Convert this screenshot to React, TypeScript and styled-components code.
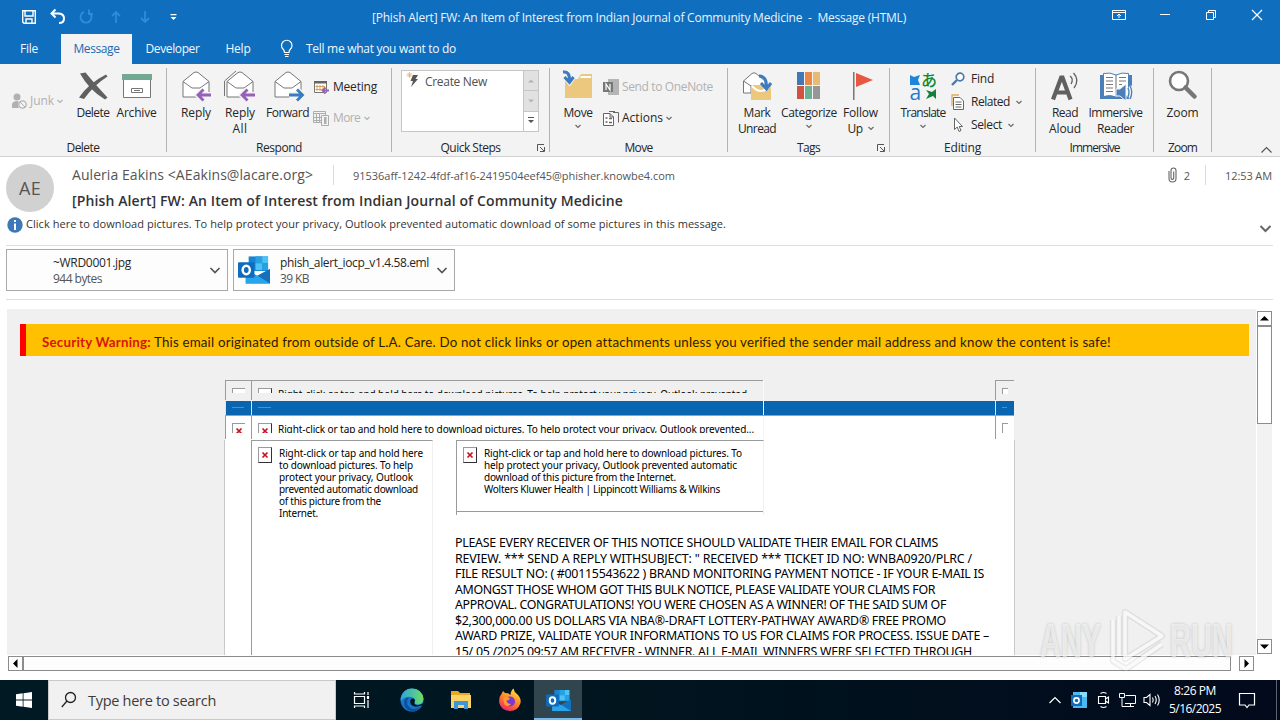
import { useLayoutEffect, useRef } from 'react';
import type { ReactNode } from 'react';
import styled, { createGlobalStyle } from 'styled-components';

const GlobalStyle = createGlobalStyle`
  * {
    box-sizing: border-box;
  }
  body {
    margin: 0;
    width: 1280px;
    height: 720px;
    overflow: hidden;
    background: #ffffff;
    font-family: "Open Sans", "Noto Sans", sans-serif;
    font-size: 12px;
    color: #262626;
  }
  svg {
    display: block;
    flex: none;
    overflow: visible;
  }
`;

const FitSpan = styled.span`
  display: inline-block;
  white-space: pre;
`;

// Spreads a single line of text over an exact width.
function Fit({ w, children }: { w: number; children: string }) {
  const ref = useRef<HTMLSpanElement>(null);
  useLayoutEffect(() => {
    const el = ref.current;
    if (!el) return;
    el.style.letterSpacing = '0px';
    const natural = el.getBoundingClientRect().width;
    el.style.letterSpacing = `${(w - natural) / children.length}px`;
  }, [w, children]);
  return <FitSpan ref={ref}>{children}</FitSpan>;
}

const Window = styled.div`
  position: relative;
  width: 1280px;
  height: 720px;
  display: flex;
  flex-direction: column;
  overflow: hidden;
`;

/* title bar and tabs */

const TitleBar = styled.header`
  display: flex;
  align-items: center;
  height: 34px;
  padding-left: 20px;
  background: #106ebe;
  color: #e8f3fc;
`;

const QuickAccess = styled.div`
  display: flex;
  align-items: center;
  gap: 11px;
  width: 352px;
`;

const WindowTitle = styled.div`
  flex: 1;
`;

const WindowButton = styled.div`
  display: flex;
  align-items: center;
  justify-content: center;
  width: 46px;
  padding-bottom: 4px;
`;

const TabBar = styled.nav`
  display: flex;
  height: 30px;
  background: #106ebe;
  color: #f0f8ff;
`;

const Tab = styled.div<{ $width: number; $active?: boolean }>`
  display: flex;
  align-items: center;
  justify-content: center;
  width: ${(p) => p.$width}px;
  padding-bottom: 1px;
  background: ${(p) => (p.$active ? '#f3f3f3' : 'transparent')};
  color: ${(p) => (p.$active ? '#1c6ab3' : 'inherit')};
`;

const TellMe = styled.div`
  display: flex;
  align-items: center;
  gap: 10px;
  padding: 0 0 1px 15px;
`;

/* ribbon */

const Ribbon = styled.section`
  display: flex;
  height: 93px;
  padding-top: 4px;
  background: #f3f3f3;
  border-bottom: 1px solid #d0d0d0;
`;

const Group = styled.div<{ $width: number }>`
  display: flex;
  flex-direction: column;
  width: ${(p) => p.$width}px;
  height: 84px;
  border-right: 1px solid #b3b3b3;
`;

const GroupBody = styled.div<{ $left: number }>`
  display: flex;
  flex: none;
  height: 71px;
  padding: 2px 0 0 ${(p) => p.$left}px;
`;

const GroupFooter = styled.div`
  display: flex;
  flex: none;
  align-items: center;
  height: 17px;
  line-height: 17px;
`;

const GroupLabel = styled.div`
  flex: 1;
  text-align: center;
`;

const Launcher = styled.div`
  width: 12px;
  margin: 0 1px 0 -13px;
`;

const BigButton = styled.div<{ $width: number }>`
  display: flex;
  flex-direction: column;
  align-items: center;
  width: ${(p) => p.$width}px;
  line-height: 15.5px;
  text-align: center;
  white-space: nowrap;
  svg:first-child {
    margin-bottom: 3px;
  }
`;

const ButtonLine = styled.div`
  display: flex;
  align-items: center;
  justify-content: center;
  gap: 5px;
  height: 15.5px;
`;

const SmallColumn = styled.div<{ $gap: number; $top: number }>`
  display: flex;
  flex-direction: column;
  gap: ${(p) => p.$gap}px;
  padding-top: ${(p) => p.$top}px;
`;

const SmallButton = styled.div<{ $disabled?: boolean; $gap?: number }>`
  display: flex;
  align-items: center;
  gap: ${(p) => p.$gap ?? 3}px;
  height: 16px;
  line-height: 16px;
  color: ${(p) => (p.$disabled ? '#b1b1b1' : 'inherit')};
`;

const Gallery = styled.div`
  display: flex;
  width: 138px;
  height: 62px;
  background: #ffffff;
  border: 1px solid #c6c6c6;
`;

const GalleryItem = styled.div`
  display: flex;
  flex: 1;
  gap: 7px;
  padding: 0 0 0 4px;
  line-height: 22px;
  color: #505050;
`;

const GalleryRail = styled.div`
  display: flex;
  flex-direction: column;
  width: 15px;
  border-left: 1px solid #c6c6c6;
`;

const RailButton = styled.div<{ $disabled?: boolean }>`
  display: flex;
  flex: 1;
  align-items: center;
  justify-content: center;
  background: ${(p) => (p.$disabled ? '#e1e1e1' : '#ffffff')};
  border-bottom: ${(p) => (p.$disabled ? '1px solid #c6c6c6' : 'none')};
`;

const CollapseRibbon = styled.div`
  margin: 78px 8px 0 auto;
`;

/* message header */

const MessageHeader = styled.section`
  display: flex;
  height: 58px;
  padding: 7px 8px 0 6px;
`;

const Avatar = styled.div`
  display: flex;
  align-items: center;
  justify-content: center;
  width: 48px;
  height: 48px;
  border-radius: 50%;
  background: #d1d1d1;
  color: #555555;
  font-size: 18px;
`;

const HeaderLines = styled.div`
  flex: 1;
  padding-left: 18px;
`;

const SenderRow = styled.div`
  display: flex;
  align-items: center;
  height: 22px;
  color: #555555;
  font-size: 11px;
`;

const SenderName = styled.div`
  width: 261px;
  padding-bottom: 2px;
  font-size: 14px;
`;

const HeaderRule = styled.i`
  width: 1px;
  height: 20px;
  background: #dcdcdc;
`;

const Recipient = styled.div`
  flex: 1;
  padding-left: 19px;
`;

const AttachCount = styled.div`
  display: flex;
  align-items: center;
  gap: 7px;
  margin-right: 15px;
`;

const SentTime = styled.div`
  width: 66px;
  text-align: right;
`;

const Subject = styled.div`
  height: 30px;
  line-height: 30px;
  font-size: 14px;
  font-weight: 600;
  color: #333333;
`;

const InfoBar = styled.div`
  display: flex;
  align-items: center;
  gap: 3px;
  height: 30px;
  padding: 0 9px 11px 7px;
  font-size: 11px;
  color: #333333;
`;

const InfoText = styled.div`
  flex: 1;
  padding-bottom: 3px;
`;

const ExpandHeader = styled.div`
  padding-top: 9px;
`;

const Attachments = styled.section`
  display: flex;
  gap: 5px;
  height: 55px;
  margin: 0 7px 0 6px;
  padding-top: 3px;
  border: solid #dddddd;
  border-width: 1px 0;
`;

const Attachment = styled.div`
  display: flex;
  align-items: center;
  width: 222px;
  height: 42px;
  padding: 0 7px 0 4px;
  background: #fdfdfd;
  border: 1px solid #a9a9a9;
`;

const FileIcon = styled.div`
  width: 42px;
`;

const FileInfo = styled.div`
  flex: 1;
  padding-top: 2px;
  line-height: 16px;
  white-space: nowrap;
`;

const FileSize = styled.div`
  color: #555555;
`;

/* message body */

const Reader = styled.section`
  display: flex;
  height: 346px;
  margin-top: 9px;
  padding-left: 7px;
`;

const Canvas = styled.div`
  flex: none;
  width: 1249px;
  height: 346px;
  padding: 15px 7px 0 13px;
  overflow: hidden;
  background: #f0f0f0;
`;

const Warning = styled.div`
  display: flex;
  align-items: center;
  height: 32px;
  padding: 3px 0 0 16px;
  background: #ffc000;
  border-left: 6px solid #ff0000;
  color: #2b1a00;
  font-family: Lato, "Open Sans", sans-serif;
  font-size: 13.3px;
`;

const WarningTitle = styled.b`
  width: 112px;
  color: #d8140a;
`;

const Mail = styled.div`
  width: 791px;
  margin: 24px 0 0 204px;
  color: #000000;
  font-family: "Noto Sans", "Open Sans", sans-serif;
  font-size: 10px;
  line-height: 12px;
`;

type StripKind = 'grey' | 'blue' | 'white';

const Strip = styled.div<{ $kind: StripKind }>`
  display: grid;
  grid-template-columns: 26px 512px 232px 19px;
  width: 789px;
  height: ${(p) => ({ grey: 21, blue: 15, white: 24 })[p.$kind]}px;
  margin-left: 1px;
  background: ${(p) => ({ grey: 'transparent', blue: '#0a65b0', white: '#ffffff' })[p.$kind]};
  border-bottom: 1px solid ${(p) => (p.$kind === 'blue' ? '#7fa9cc' : 'transparent')};
`;

const StripCell = styled.div<{ $kind: StripKind }>`
  display: flex;
  align-items: flex-start;
  padding: ${(p) => ({ grey: 7, blue: 6, white: 7 })[p.$kind]}px 6px 0;
  border-style: solid;
  border-color: ${(p) => (p.$kind === 'blue' ? '#d6e4f0' : '#9b9b9b')};
  border-width: ${(p) => (p.$kind === 'grey' ? '1px 0 0 1px' : '0 0 0 1px')};
  white-space: nowrap;
  overflow: hidden;
`;

const StripGap = styled.div<{ $kind: StripKind }>`
  border-left: 1px solid ${(p) => ({ grey: '#fafafa', blue: '#ffffff', white: '#f4f4f4' })[p.$kind]};
`;

const Cut = styled.div<{ $height: number }>`
  display: flex;
  gap: 6px;
  height: ${(p) => p.$height}px;
  overflow: hidden;
`;

const Dash = styled.i<{ $width: number }>`
  width: ${(p) => p.$width}px;
  height: 1px;
  background: #4f90c4;
`;

const BrokenBox = styled.span`
  display: flex;
  flex: none;
  align-items: center;
  justify-content: center;
  width: 14px;
  height: 16px;
  background: #ffffff;
  border: 1px solid #9a9a9a;
  border-right-color: #333333;
  border-bottom-color: #333333;
`;

const Sheet = styled.div`
  display: flex;
  height: 300px;
  background: #ffffff;
  border: solid #c9c9c9;
  border-width: 0 1px;
`;

const Sidebar = styled.div`
  display: flex;
  gap: 7px;
  width: 182px;
  margin-left: 26px;
  padding: 6px 0 0 6px;
  border: solid #9b9b9b;
  border-width: 1px 0 0 1px;
  border-right: 1px solid #f0f0f0;
`;

const Article = styled.div`
  margin-left: 23px;
`;

const PictureFrame = styled.div`
  display: flex;
  gap: 7px;
  width: 308px;
  height: 75px;
  padding: 6px 0 0 6px;
  background: linear-gradient(#9b9b9b, #9b9b9b) 0 70px / 308px 1px no-repeat;
  border: solid #9b9b9b;
  border-width: 1px 0 0 1px;
  border-right: 1px solid #f0f0f0;
`;

const TextLine = styled.div`
  white-space: nowrap;
`;

const Notice = styled.div`
  margin: 20px 0 0 -1px;
  font-size: 12.4px;
  line-height: 15.5px;
`;

const VerticalScroll = styled.div`
  display: flex;
  flex-direction: column;
  width: 15px;
  height: 343px;
  margin: 2px 0 0 1px;
  background: #f2f2f2;
`;

const ScrollButton = styled.div`
  display: flex;
  flex: none;
  align-items: center;
  justify-content: center;
  width: 15px;
  height: 15px;
  background: #ffffff;
  border: 1px solid #8c8c8c;
`;

const VerticalThumb = styled.div`
  height: 98px;
  margin-bottom: auto;
  background: #ffffff;
  border: 1px solid #8c8c8c;
`;

const HorizontalScroll = styled.div`
  display: flex;
  height: 15px;
  margin-top: 1px;
  padding-left: 8px;
`;

const HorizontalThumb = styled.div`
  width: 1208px;
  margin-right: 8px;
  background: #fdfdfd;
  border: 1px solid #8c8c8c;
`;

const Watermark = styled.div`
  position: absolute;
  left: 1040px;
  top: 606px;
  display: flex;
  align-items: center;
  height: 68px;
  color: rgba(255, 255, 255, 0.62);
  font-family: "Liberation Sans", sans-serif;
  font-size: 49px;
  font-weight: bold;
  text-shadow: 0 0 4px rgba(0, 0, 0, 0.2);
`;

const WatermarkWord = styled.span`
  display: block;
  width: 68px;
  transform: scaleX(0.59);
  transform-origin: left center;
`;

/* taskbar */

const Taskbar = styled.footer`
  display: flex;
  flex: none;
  height: 40px;
  margin-top: 9px;
  background: linear-gradient(90deg, #001a24 0%, #00151f 45%, #020a1c 100%);
  color: #ffffff;
`;

const StartButton = styled.div`
  display: flex;
  align-items: center;
  justify-content: center;
  width: 48px;
`;

const SearchBox = styled.div`
  display: flex;
  align-items: center;
  gap: 11px;
  width: 288px;
  margin-right: 2px;
  padding-left: 12px;
  background: #f1f1f1;
  border: 1px solid #c9c9c9;
  color: #3c3c3c;
  font-size: 14.5px;
`;

const TaskButton = styled.div<{ $active?: boolean }>`
  display: flex;
  align-items: center;
  justify-content: center;
  width: ${(p) => (p.$active ? 48 : 49)}px;
  padding-top: ${(p) => (p.$active ? 2 : 0)}px;
  background: ${(p) => (p.$active ? '#31454e' : 'transparent')};
  border-bottom: ${(p) => (p.$active ? '2px solid #76b9ed' : 'none')};
`;

const Tray = styled.div`
  display: flex;
  align-items: center;
  gap: 7px;
  margin-left: auto;
`;

const TrayToggle = styled.div`
  margin-right: 2px;
`;

const Clock = styled.div`
  width: 56px;
  margin: 0 -2px 0 -1px;
  line-height: 18px;
  text-align: center;
  white-space: nowrap;
`;

const ShowDesktop = styled.div`
  width: 4px;
  height: 40px;
  margin-left: 3px;
  border-left: 1px solid #5a6470;
`;

/* icons */

function Chevron({ size = 6, color = '#6a6a6a', width = 1.2, up = false }: { size?: number; color?: string; width?: number; up?: boolean }) {
  return (
    <svg width={size} height={size / 2 + 2} viewBox={`0 0 ${size} ${size / 2 + 2}`} fill="none" stroke={color} strokeWidth={width}>
      <path d={up ? `M.5 ${size / 2 + 1} L${size / 2} 1.5 L${size - 0.5} ${size / 2 + 1}` : `M.5 1 L${size / 2} ${size / 2 + 0.5} L${size - 0.5} 1`} />
    </svg>
  );
}

function Envelope({ kind }: { kind: 'reply' | 'replyAll' | 'forward' }) {
  const arrow = kind === 'forward' ? 'M18 25H31M26 19.500 31.500 25 26 30.500' : 'M32 25H19M24.500 19.500 19 25 24.500 30.500';
  return (
    <svg width="34" height="32" viewBox="0 0 34 32" fill="none">
      {kind === 'replyAll' && <path d="M1.500 26V11L13 1" stroke="#777" />}
      <path d="M4 11.500 15 2.500Q17 1.500 19 2.500L30 11.500V27H4Z" fill="#fff" stroke="#777" />
      <path d="M4 11.500 13 18H21L30 11.500" stroke="#777" />
      <path d={arrow} stroke="#f3f3f3" strokeWidth="6" />
      <path d={arrow} stroke={kind === 'forward' ? '#3b7bbf' : '#9560b8'} strokeWidth="2.800" />
    </svg>
  );
}

function OutlookIcon({ width, height }: { width: number; height: number }) {
  return (
    <svg width={width} height={height} viewBox="0 0 33 28">
      <path d="M11 0H31V15H11Z" fill="#1684d0" />
      <path d="M18 0H25V7H18Z" fill="#28a0e4" />
      <path d="M25 0H31V7H25ZM18 7H25V14H18Z" fill="#4cc3f5" />
      <path d="M25 7H31V14H25Z" fill="#28a0e4" />
      <path d="M8 14 20 20 33 13V28H8Z" fill="#1a8fdc" />
      <path d="M33 13V28L20 20Z" fill="#1470bd" />
      <path d="M8 22 20 20 33 28H8Z" fill="#27a4ea" />
      <rect x="0" y="6" width="17" height="16" rx="1" fill="#0f6cbd" />
      <ellipse cx="8.500" cy="14" rx="3.700" ry="4.300" fill="none" stroke="#fff" strokeWidth="2.500" />
    </svg>
  );
}

const RedCross = () => (
  <svg width="8" height="8" viewBox="0 0 8 8" stroke="#cc1020" strokeWidth="1.700">
    <path d="M1.500 1.500 6.500 6.500M6.500 1.500 1.500 6.500" />
  </svg>
);

const Broken = () => (
  <BrokenBox>
    <RedCross />
  </BrokenBox>
);

const LauncherIcon = () => (
  <svg width="10" height="10" viewBox="0 0 10 10" fill="none" stroke="#555">
    <path d="M1.500 8V1.500H8M4 4 8 8M8.500 4V8.500H4" />
  </svg>
);

const Arrow = ({ d }: { d: string }) => (
  <svg width="9" height="9" viewBox="0 0 9 9">
    <path d={d} fill="#000" />
  </svg>
);

const noticeLines: [number, string][] = [
  [483, 'PLEASE EVERY RECEIVER OF THIS NOTICE SHOULD VALIDATE THEIR EMAIL FOR CLAIMS'],
  [517, 'REVIEW. *** SEND A REPLY WITHSUBJECT: " RECEIVED *** TICKET ID NO: WNBA0920/PLRC /'],
  [529, 'FILE RESULT NO: ( #00115543622 ) BRAND MONITORING PAYMENT NOTICE - IF YOUR E-MAIL IS'],
  [480, 'AMONGST THOSE WHOM GOT THIS BULK NOTICE, PLEASE VALIDATE YOUR CLAIMS FOR'],
  [491, 'APPROVAL. CONGRATULATIONS! YOU WERE CHOSEN AS A WINNER! OF THE SAID SUM OF'],
  [491, '$2,300,000.00 US DOLLARS VIA NBA®-DRAFT LOTTERY-PATHWAY AWARD® FREE PROMO'],
  [534, 'AWARD PRIZE, VALIDATE YOUR INFORMATIONS TO US FOR CLAIMS FOR PROCESS. ISSUE DATE –'],
  [517, '15/ 05 /2025 09:57 AM RECEIVER - WINNER. ALL E-MAIL WINNERS WERE SELECTED THROUGH'],
];

const sidebarLines: [number, string][] = [
  [144, 'Right-click or tap and hold here'],
  [134, 'to download pictures. To help'],
  [134, 'protect your privacy, Outlook'],
  [139, 'prevented automatic download'],
  [102, 'of this picture from the'],
  [39, 'Internet.'],
];

const pictureLines: [number, string][] = [
  [258, 'Right-click or tap and hold here to download pictures. To'],
  [253, 'help protect your privacy, Outlook prevented automatic'],
  [192, 'download of this picture from the Internet.'],
  [236, 'Wolters Kluwer Health | Lippincott Williams & Wilkins'],
];

function RibbonGroup({ width, left, label, labelWidth, launcher, children }: { width: number; left: number; label: string; labelWidth: number; launcher?: boolean; children: ReactNode }) {
  return (
    <Group $width={width}>
      <GroupBody $left={left}>{children}</GroupBody>
      <GroupFooter>
        <GroupLabel>
          <Fit w={labelWidth}>{label}</Fit>
        </GroupLabel>
        {launcher && (
          <Launcher>
            <LauncherIcon />
          </Launcher>
        )}
      </GroupFooter>
    </Group>
  );
}

export default function App() {
  return (
    <>
      <GlobalStyle />
      <Window>
        <TitleBar>
          <QuickAccess>
            <svg width="18" height="18" viewBox="0 0 18 18" fill="none" stroke="#fff" strokeWidth="1.400">
              <path d="M2.700 2.700H15.300V15.300H4L2.700 14Z M5 3V8H13V3M6 15V11H12V15" />
            </svg>
            <svg width="18" height="18" viewBox="0 0 18 18" fill="none" stroke="#fff" strokeWidth="2">
              <path d="M6.500 1.500 2.500 5.500 6.500 9.500M3 5.500H10Q15 6 15 10.500Q15 15 10 15" />
            </svg>
            <svg width="18" height="18" viewBox="0 0 18 18" fill="none" stroke="#2d8dd8" strokeWidth="1.900">
              <path d="M11 4.500A5.500 5.500 0 1 1 6 4M11 1.500V6H15" />
            </svg>
            <svg width="18" height="18" viewBox="0 0 18 18" fill="none" stroke="#2d8dd8" strokeWidth="1.800">
              <path d="M9 15V4M5 8 9 4 13 8" />
            </svg>
            <svg width="18" height="18" viewBox="0 0 18 18" fill="none" stroke="#2d8dd8" strokeWidth="1.800">
              <path d="M9 3V14M5 10 9 14 13 10" />
            </svg>
            <svg width="18" height="18" viewBox="0 0 18 18">
              <path d="M5.500 6H11.500V7.200H5.500ZM5.500 9H11.500L8.500 12Z" fill="#fff" />
            </svg>
          </QuickAccess>
          <WindowTitle>
            <Fit w={534}>[Phish Alert] FW: An Item of Interest from Indian Journal of Community Medicine  -  Message (HTML)</Fit>
          </WindowTitle>
          <WindowButton>
            <svg width="14" height="12" viewBox="0 0 14 12" fill="none" stroke="#fff">
              <path d="M.5 1.500H13.500V10.500H.5ZM.5 3.500H13.500M7 9V5M5 7 7 5 9 7" />
            </svg>
          </WindowButton>
          <WindowButton>
            <svg width="10" height="12" viewBox="0 0 10 12" stroke="#fff">
              <path d="M0 5.500H10" />
            </svg>
          </WindowButton>
          <WindowButton>
            <svg width="10" height="12" viewBox="0 0 10 12" fill="none" stroke="#fff">
              <path d="M.5 3.500H7.500V10.500H.5ZM2.500 3V1.500H9.500V8.500H8" />
            </svg>
          </WindowButton>
          <WindowButton>
            <svg width="12" height="12" viewBox="0 0 12 12" stroke="#fff" strokeWidth="1.200">
              <path d="M1 1 11 11M11 1 1 11" />
            </svg>
          </WindowButton>
        </TitleBar>

        <TabBar>
          <Tab $width={58}><Fit w={18}>File</Fit></Tab>
          <Tab $width={3} />
          <Tab $width={71} $active><Fit w={46}>Message</Fit></Tab>
          <Tab $width={81}><Fit w={54}>Developer</Fit></Tab>
          <Tab $width={50}><Fit w={25}>Help</Fit></Tab>
          <TellMe>
            <svg width="18" height="20" viewBox="0 0 18 20" fill="none" stroke="#fff" strokeWidth="1.200">
              <path d="M6.500 13.500Q6.500 11.500 5 10Q3.500 8.500 3.500 6.500A5 5 0 0 1 14 6.500Q14 8.500 12.500 10Q11 11.500 11 13.500ZM6.500 15.500H11M7 17.500H10.500" />
            </svg>
            <Fit w={150}>Tell me what you want to do</Fit>
          </TellMe>
        </TabBar>

        <Ribbon>
          <RibbonGroup width={167} left={11} label="Delete" labelWidth={33}>
            <SmallColumn $gap={0} $top={23}>
              <SmallButton $disabled>
                <svg width="16" height="16" viewBox="0 0 16 16" fill="none" stroke="#b1b1b1">
                  <circle cx="6" cy="4" r="3.500" fill="#b1b1b1" stroke="none" />
                  <path d="M1 14V11Q2 8 6 8L8 9Q6 12 8 15H1Z" fill="#b1b1b1" stroke="none" />
                  <circle cx="11.500" cy="11.500" r="3.700" fill="#f3f3f3" strokeWidth="1.300" />
                  <path d="M9 9 14 14" />
                </svg>
                <Fit w={24}>Junk</Fit>
                <Chevron color="#b1b1b1" />
              </SmallButton>
            </SmallColumn>
            <BigButton $width={60}>
              <svg width="32" height="32" viewBox="0 0 32 32" fill="#606060">
                <path d="M3 3.500 8.500 2.500Q17 13 30.500 27.500L28 29.500Q12 20 3 3.500ZM29 4.500 30.500 6.500Q17 15 7 29L2 27.500Q12 13 29 4.500Z" />
              </svg>
              <ButtonLine><Fit w={33}>Delete</Fit></ButtonLine>
            </BigButton>
            <BigButton $width={27}>
              <svg width="32" height="32" viewBox="0 0 32 32" fill="none" stroke="#777">
                <path d="M2.500 9V27.500H29.500V9" fill="#fff" />
                <path d="M1 4H31V10H1Z" fill="#73a892" stroke="none" />
                <path d="M10.500 18.500H21.500V22.500H10.500ZM13 20.500H19" />
              </svg>
              <ButtonLine><Fit w={40}>Archive</Fit></ButtonLine>
            </BigButton>
          </RibbonGroup>

          <RibbonGroup width={225} left={7} label="Respond" labelWidth={46}>
            <BigButton $width={44}>
              <Envelope kind="reply" />
              <ButtonLine><Fit w={30}>Reply</Fit></ButtonLine>
            </BigButton>
            <BigButton $width={44}>
              <Envelope kind="replyAll" />
              <ButtonLine><Fit w={30}>Reply</Fit></ButtonLine>
              <ButtonLine><Fit w={15}>All</Fit></ButtonLine>
            </BigButton>
            <BigButton $width={51}>
              <Envelope kind="forward" />
              <ButtonLine><Fit w={43}>Forward</Fit></ButtonLine>
            </BigButton>
            <SmallColumn $gap={15} $top={9}>
              <SmallButton $gap={4}>
                <svg width="16" height="16" viewBox="0 0 16 16" fill="none">
                  <path d="M1.500 3H13.500V13.500H1.500Z" fill="#fff" stroke="#777" />
                  <path d="M1 2H14V4.500H1Z" fill="#666" />
                  <path d="M4 6V12M7 6V12M10 6V12M2.500 7.500H12M2.500 10.500H9" stroke="#d9a05b" />
                  <path d="M16 11.500H10M12.500 8.500 9.500 11.500 12.500 14.500" stroke="#9560b8" strokeWidth="1.800" />
                </svg>
                <Fit w={44}>Meeting</Fit>
              </SmallButton>
              <SmallButton $disabled $gap={4}>
                <svg width="16" height="16" viewBox="0 0 16 16" fill="none" stroke="#adadad">
                  <path d="M.5 1.500H12.500V12.500H.5ZM.5 3.500H12.500M3.500 4V12M6.500 4V12M1 7.500H8M1 10.500H8" />
                  <path d="M8.500 5.500H15.500V15.500H8.500Z" fill="#f3f3f3" />
                  <path d="M11 7H13.500V14H11Z" fill="#adadad" stroke="none" />
                </svg>
                <Fit w={27}>More</Fit>
                <Chevron color="#b1b1b1" />
              </SmallButton>
            </SmallColumn>
          </RibbonGroup>

          <RibbonGroup width={158} left={9} label="Quick Steps" labelWidth={60} launcher>
            <Gallery>
              <GalleryItem>
                <svg width="12" height="18" viewBox="0 0 12 18">
                  <path d="M7 4H12L9.500 8H12L5 16 7 10H4.500Z" fill="#555" />
                  <path d="M3.500 1V7M.5 4H6.500M1.500 2 5.500 6M5.500 2 1.500 6" stroke="#e5b265" strokeWidth=".8" />
                </svg>
                <Fit w={62}>Create New</Fit>
              </GalleryItem>
              <GalleryRail>
                <RailButton $disabled>
                  <svg width="6" height="4" viewBox="0 0 6 4"><path d="M0 3.500H6L3 .5Z" fill="#b3b3b3" /></svg>
                </RailButton>
                <RailButton $disabled>
                  <svg width="6" height="4" viewBox="0 0 6 4"><path d="M0 .5H6L3 3.500Z" fill="#b3b3b3" /></svg>
                </RailButton>
                <RailButton>
                  <svg width="8" height="8" viewBox="0 0 8 8"><path d="M1 0H7V1H1ZM1 3H7L4 6Z" fill="#555" /></svg>
                </RailButton>
              </GalleryRail>
            </Gallery>
          </RibbonGroup>

          <RibbonGroup width={178} left={3} label="Move" labelWidth={28}>
            <BigButton $width={50}>
              <svg width="32" height="32" viewBox="0 0 32 32">
                <path d="M3 9H16L19 4H30V28H3Z" fill="#ecc77e" />
                <path d="M19 6H29V8H18Z" fill="#fff" />
                <path d="M1 2Q8 1 7.500 10M3 7 7.500 12.500 11.500 7" fill="none" stroke="#f3f3f3" strokeWidth="5" />
                <path d="M1 2Q8 1 7.500 11M2.500 7 7.500 12.500 11.500 7" fill="none" stroke="#3b7bbf" strokeWidth="3" />
              </svg>
              <ButtonLine><Fit w={29}>Move</Fit></ButtonLine>
              <ButtonLine><Chevron /></ButtonLine>
            </BigButton>
            <SmallColumn $gap={15} $top={9}>
              <SmallButton $disabled>
                <svg width="16" height="16" viewBox="0 0 16 16">
                  <path d="M5 0H16V16H5Z" fill="#b5b5b5" />
                  <path d="M0 3H10V13H0Z" fill="#777" />
                  <path d="M3 11V5L7 11V5" fill="none" stroke="#fff" strokeWidth="1.200" />
                </svg>
                <Fit w={91}>Send to OneNote</Fit>
              </SmallButton>
              <SmallButton>
                <svg width="16" height="16" viewBox="0 0 16 16" fill="none" stroke="#666">
                  <path d="M10 2.500H15.500V12.500M6 1.500H12" />
                  <path d="M.5 3.500H7L10.500 7V15.500H.5ZM7 3.500V7H10.500" fill="#fff" />
                  <path d="M2.500 8H4.500M2.500 12H4.500M6 8.500H9M6 12.500H9" strokeWidth="1.300" />
                </svg>
                <Fit w={41}>Actions</Fit>
                <Chevron />
              </SmallButton>
            </SmallColumn>
          </RibbonGroup>

          <RibbonGroup width={162} left={5} label="Tags" labelWidth={23} launcher>
            <BigButton $width={48}>
              <svg width="32" height="32" viewBox="0 0 32 32" fill="none">
                <path d="M2.500 11 11 3.500Q13 2 15 3.500L24 11V23H2.500Z" fill="#fff" stroke="#777" />
                <path d="M2.500 11 10 16V23" stroke="#777" />
                <path d="M10 15H30V30H10Z" fill="#ecc77e" />
                <path d="M11 16Q20 26 29 16" stroke="#fff" strokeWidth="2" />
                <path d="M18 6Q26 6 25.500 17M20 13 25.500 19 30 13" stroke="#3b7bbf" strokeWidth="3" />
              </svg>
              <ButtonLine><Fit w={27}>Mark</Fit></ButtonLine>
              <ButtonLine><Fit w={38}>Unread</Fit></ButtonLine>
            </BigButton>
            <BigButton $width={56}>
              <svg width="32" height="32" viewBox="0 0 32 32">
                <path d="M4 2H11V15H4Z" fill="#4277b5" />
                <path d="M12 2H19V15H12Z" fill="#ec8745" />
                <path d="M20 2H27V15H20Z" fill="#e7bb73" />
                <path d="M4 16H11V29H4Z" fill="#cf5340" />
                <path d="M12 16H19V29H12Z" fill="#6daf94" />
                <path d="M20 16H27V29H20Z" fill="#969696" />
              </svg>
              <ButtonLine><Fit w={56}>Categorize</Fit></ButtonLine>
              <ButtonLine><Chevron /></ButtonLine>
            </BigButton>
            <BigButton $width={47}>
              <svg width="32" height="32" viewBox="0 0 32 32">
                <path d="M8 2H9.500V30H8Z" fill="#777" />
                <path d="M11 3 28 10 11 17Z" fill="#e8573f" />
              </svg>
              <ButtonLine><Fit w={35}>Follow</Fit></ButtonLine>
              <ButtonLine><Fit w={15}>Up</Fit><Chevron /></ButtonLine>
            </BigButton>
          </RibbonGroup>

          <RibbonGroup width={146} left={6} label="Editing" labelWidth={37}>
            <BigButton $width={54}>
              <svg width="32" height="32" viewBox="0 0 32 32">
                <path d="M3 5 7 7 13 5 11 10 13 15H3Z" fill="#1c86dc" />
                <path d="M29 19V29L26 26 19 29 22 24 19 20 25 22Z" fill="#15803c" />
                <text x="2.500" y="29.500" fontSize="21" fontFamily="Open Sans" fill="#1c7cd2">a</text>
                <text x="14" y="15.500" fontSize="16" fontWeight="500" fontFamily="Noto Sans CJK JP" fill="#118a2e">あ</text>
              </svg>
              <ButtonLine><Fit w={45}>Translate</Fit></ButtonLine>
              <ButtonLine><Chevron /></ButtonLine>
            </BigButton>
            <SmallColumn $gap={7} $top={1}>
              <SmallButton $gap={6}>
                <svg width="15" height="14" viewBox="-1 0 15 14" fill="none" stroke="#4a79ae" strokeWidth="1.700">
                  <circle cx="9" cy="5" r="3.800" fill="#fff" />
                  <path d="M6 8 1 13" strokeWidth="2.400" />
                </svg>
                <Fit w={23}>Find</Fit>
              </SmallButton>
              <SmallButton $gap={6}>
                <svg width="15" height="16" viewBox="-1 0 15 16" fill="none" stroke="#666">
                  <path d="M1 12V1H8" stroke="#e0ab63" strokeWidth="1.300" />
                  <path d="M2.500 3.500H9L12.500 7V15.500H2.500ZM4.500 8H10.500M4.500 10.500H10.500M4.500 13H10.500" fill="#fff" />
                </svg>
                <Fit w={39}>Related</Fit>
                <Chevron />
              </SmallButton>
              <SmallButton $gap={6}>
                <svg width="15" height="16" viewBox="-1 0 15 16" fill="#fff" stroke="#666">
                  <path d="M3.500 1V12.500L6.200 10 8 14.500 10 13.500 8.200 9.500H11.500Z" />
                </svg>
                <Fit w={31}>Select</Fit>
                <Chevron />
              </SmallButton>
            </SmallColumn>
          </RibbonGroup>

          <RibbonGroup width={118} left={6} label="Immersive" labelWidth={50}>
            <BigButton $width={46}>
              <svg width="32" height="32" viewBox="0 0 32 32" fill="none" stroke="#606060">
                <path d="M4 29.500 12.200 7.500H13.500L21.500 29.500M7.500 22.500H18" strokeWidth="4.200" />
                <path d="M21 6Q25 9 22 14M24.500 3Q31 10 25 18" strokeWidth="1.300" />
              </svg>
              <ButtonLine><Fit w={26}>Read</Fit></ButtonLine>
              <ButtonLine><Fit w={32}>Aloud</Fit></ButtonLine>
            </BigButton>
            <BigButton $width={55}>
              <svg width="34" height="32" viewBox="0 0 34 32" fill="none">
                <path d="M1 5H33V29H1Z" fill="#4a7fb8" />
                <path d="M4.500 3.500Q11 2 17 5Q23 2 29.500 3.500V26.500Q23 24.500 17 27Q11 24.500 4.500 26.500Z" fill="#fff" stroke="#4a7fb8" />
                <path d="M17 5V26M7 7.500H14M7 11H14M7 14.500H14M7 18H14M7 21.500H14M20 7.500H27M20 11H27M20 14.500H23" stroke="#777" strokeWidth="1.100" />
                <path d="M17 19H21L27 14V31L21 26H17Z" fill="#4a7fb8" stroke="#f3f3f3" />
                <path d="M29 18Q31 22 29 27M31 16Q34.500 22 31 29" stroke="#f3f3f3" strokeWidth="3" />
                <path d="M29 18Q31 22 29 27M31 16Q34.500 22 31 29" stroke="#4a7fb8" strokeWidth="1.300" />
              </svg>
              <ButtonLine><Fit w={54}>Immersive</Fit></ButtonLine>
              <ButtonLine><Fit w={37}>Reader</Fit></ButtonLine>
            </BigButton>
          </RibbonGroup>

          <RibbonGroup width={58} left={6} label="Zoom" labelWidth={29}>
            <BigButton $width={45}>
              <svg width="32" height="32" viewBox="0 0 32 32" fill="none" stroke="#777">
                <circle cx="12" cy="11" r="9" fill="#fff" strokeWidth="2.600" />
                <path d="M18.500 17.500 27.500 26.500" strokeWidth="4.500" strokeLinecap="round" />
              </svg>
              <ButtonLine><Fit w={32}>Zoom</Fit></ButtonLine>
            </BigButton>
          </RibbonGroup>
          <CollapseRibbon>
            <Chevron size={11} up color="#555" />
          </CollapseRibbon>
        </Ribbon>

        <MessageHeader>
          <Avatar><Fit w={22}>AE</Fit></Avatar>
          <HeaderLines>
            <SenderRow>
              <SenderName><Fit w={241}>{'Auleria Eakins <AEakins@lacare.org>'}</Fit></SenderName>
              <HeaderRule />
              <Recipient><Fit w={322}>91536aff-1242-4fdf-af16-2419504eef45@phisher.knowbe4.com</Fit></Recipient>
              <AttachCount>
                <svg width="9" height="16" viewBox="0 0 9 16" fill="none" stroke="#666" strokeWidth="1.100">
                  <path d="M1 4V11.500A3.300 3.300 0 0 0 8 11.500V3.500A2.300 2.300 0 0 0 3 3.500V11A1.200 1.200 0 0 0 5.700 11V4.500" />
                </svg>
                2
              </AttachCount>
              <HeaderRule />
              <SentTime><Fit w={47}>12:53 AM</Fit></SentTime>
            </SenderRow>
            <Subject><Fit w={551}>[Phish Alert] FW: An Item of Interest from Indian Journal of Community Medicine</Fit></Subject>
          </HeaderLines>
        </MessageHeader>
        <InfoBar>
          <svg width="16" height="16" viewBox="0 0 16 16">
            <circle cx="8" cy="8" r="7.700" fill="#3d78b8" />
            <path d="M7 3H9V5H7ZM7 6.500H9V13H7Z" fill="#fff" />
          </svg>
          <InfoText>
            <Fit w={700}>Click here to download pictures. To help protect your privacy, Outlook prevented automatic download of some pictures in this message.</Fit>
          </InfoText>
          <ExpandHeader><Chevron size={11} width={2} color="#666" /></ExpandHeader>
        </InfoBar>

        <Attachments>
          <Attachment>
            <FileIcon />
            <FileInfo>
              <div><Fit w={78}>~WRD0001.jpg</Fit></div>
              <FileSize><Fit w={49}>944 bytes</Fit></FileSize>
            </FileInfo>
            <Chevron size={10} width={1.700} color="#555" />
          </Attachment>
          <Attachment>
            <FileIcon><OutlookIcon width={32} height={28} /></FileIcon>
            <FileInfo>
              <div><Fit w={149}>phish_alert_iocp_v1.4.58.eml</Fit></div>
              <FileSize><Fit w={29}>39 KB</Fit></FileSize>
            </FileInfo>
            <Chevron size={10} width={1.700} color="#555" />
          </Attachment>
        </Attachments>

        <Reader>
          <Canvas>
            <Warning>
              <WarningTitle><Fit w={109}>Security Warning:</Fit></WarningTitle>
              <Fit w={956}>This email originated from outside of L.A. Care. Do not click links or open attachments unless you verified the sender mail address and know the content is safe!</Fit>
            </Warning>
            <Mail>
              <Strip $kind="grey">
                <StripCell $kind="grey"><Cut $height={5}><Broken /></Cut></StripCell>
                <StripCell $kind="grey">
                  <Cut $height={5}>
                    <Broken />
                    <Fit w={469}>Right-click or tap and hold here to download pictures. To help protect your privacy, Outlook prevented</Fit>
                  </Cut>
                </StripCell>
                <StripGap $kind="grey" />
                <StripCell $kind="grey"><Cut $height={6}><BrokenBox /></Cut></StripCell>
              </Strip>
              <Strip $kind="blue">
                <StripCell $kind="blue"><Dash $width={12} /></StripCell>
                <StripCell $kind="blue"><Dash $width={13} /></StripCell>
                <StripGap $kind="blue" />
                <StripCell $kind="blue"><Dash $width={5} /></StripCell>
              </Strip>
              <Strip $kind="white">
                <StripCell $kind="white"><Cut $height={10}><Broken /></Cut></StripCell>
                <StripCell $kind="white">
                  <Cut $height={10}>
                    <Broken />
                    <Fit w={476}>Right-click or tap and hold here to download pictures. To help protect your privacy, Outlook prevented...</Fit>
                  </Cut>
                </StripCell>
                <StripGap $kind="white" />
                <StripCell $kind="white"><Cut $height={10}><BrokenBox /></Cut></StripCell>
              </Strip>
              <Sheet>
                <Sidebar>
                  <Broken />
                  <div>
                    {sidebarLines.map(([w, text]) => (
                      <TextLine key={text}><Fit w={w}>{text}</Fit></TextLine>
                    ))}
                  </div>
                </Sidebar>
                <Article>
                  <PictureFrame>
                    <Broken />
                    <div>
                      {pictureLines.map(([w, text]) => (
                        <TextLine key={text}><Fit w={w}>{text}</Fit></TextLine>
                      ))}
                    </div>
                  </PictureFrame>
                  <Notice>
                    {noticeLines.map(([w, text]) => (
                      <TextLine key={text}><Fit w={w}>{text}</Fit></TextLine>
                    ))}
                  </Notice>
                </Article>
              </Sheet>
            </Mail>
          </Canvas>
          <VerticalScroll>
            <ScrollButton><Arrow d="M0 6.500H9L4.500 2Z" /></ScrollButton>
            <VerticalThumb />
            <ScrollButton><Arrow d="M0 2.500H9L4.500 7Z" /></ScrollButton>
          </VerticalScroll>
        </Reader>
        <HorizontalScroll>
          <ScrollButton><Arrow d="M6.500 0V9L2 4.500Z" /></ScrollButton>
          <HorizontalThumb />
          <ScrollButton><Arrow d="M2.500 0V9L7 4.500Z" /></ScrollButton>
        </HorizontalScroll>

        <Taskbar>
          <StartButton>
            <svg width="16" height="16" viewBox="0 0 16 16" fill="#fff">
              <path d="M0 2.200 6.700 1.300V7.600H0ZM7.500 1.200 16 0V7.600H7.500ZM0 8.400H6.700V14.700L0 13.800ZM7.500 8.400H16V16L7.500 14.800Z" />
            </svg>
          </StartButton>
          <SearchBox>
            <svg width="16" height="18" viewBox="0 0 16 18" fill="none" stroke="#222" strokeWidth="1.300">
              <circle cx="9.500" cy="6.500" r="5" />
              <path d="M6 10 .8 16" />
            </svg>
            <Fit w={128}>Type here to search</Fit>
          </SearchBox>
          <TaskButton>
            <svg width="18" height="18" viewBox="2 0 18 18" fill="none" stroke="#fff" strokeWidth="1.200">
              <path d="M2.500 5.500H12.500V12.500H2.500ZM2.500 1V3H12.500V1M2.500 17V15H12.500V17M16 1V4M16 9V17" />
              <path d="M16 5V8" strokeWidth="2.200" />
            </svg>
          </TaskButton>
          <TaskButton>
            <svg width="24" height="24" viewBox="0 0 24 24">
              <defs>
                <linearGradient id="edgeTop" x1="0" y1="0.500" x2="1" y2="0.500">
                  <stop offset="0" stopColor="#2aa5e0" />
                  <stop offset="1" stopColor="#6fdc62" />
                </linearGradient>
              </defs>
              <circle cx="12" cy="12" r="11.500" fill="#1577cb" />
              <path d="M.8 10Q3 .5 12 .5Q22.500 1 23.500 11Q23 16 18 16.500Q13.500 16.500 15 13.500Q16 10 11 9Q5 8 .8 13Z" fill="url(#edgeTop)" />
              <path d="M9 10Q5 14 9 19Q14 23 20.500 18.500Q17 23.500 12 23.500Q4 22 4 14Q5 9 9 10Z" fill="#104f9f" />
              <path d="M21.500 17.500Q15 20 11.500 17Q9 14 11 11Q14.500 9.500 15 12.500Q13.500 15.500 15.500 16.800Q18.500 18 22.500 15.500L24 17Z" fill="#001822" />
            </svg>
          </TaskButton>
          <TaskButton>
            <svg width="22" height="20" viewBox="0 0 22 20">
              <path d="M1 1H8L10 3H20V18H1Z" fill="#e9a825" />
              <path d="M1 5H21V18H1Z" fill="#fbd465" />
              <path d="M4 11H18V19H14V15H8V19H4Z" fill="#3d97d6" />
            </svg>
          </TaskButton>
          <TaskButton>
            <svg width="24" height="24" viewBox="0 0 24 24">
              <defs>
                <linearGradient id="fox" x1="0.800" y1="0" x2="0.300" y2="1">
                  <stop offset="0" stopColor="#ffe84a" />
                  <stop offset="0.500" stopColor="#ff8a25" />
                  <stop offset="1" stopColor="#f0246a" />
                </linearGradient>
              </defs>
              <path d="M4 5 5 3 7 5Q11 5 12.500 7Q12.500 3 15.500 .5Q16 4 19 6Q23.500 10 22.500 15Q20 23 12 23Q3 22.500 1.300 15Q.5 9 4 5Z" fill="url(#fox)" />
              <circle cx="12" cy="13.500" r="5" fill="#7b38d2" />
              <path d="M5 10Q9 8 12 10.500Q11 12.500 8.500 12.500Q9 16 13 16Q10 19.500 6.500 16.500Z" fill="#ff9a2e" />
            </svg>
          </TaskButton>
          <TaskButton $active><OutlookIcon width={25} height={21} /></TaskButton>
          <Tray>
            <TrayToggle><Chevron size={12} up color="#fff" /></TrayToggle>
            <svg width="18" height="18" viewBox="0 0 18 18">
              <path d="M3 1H17V17H3Z" fill="#49b9ef" />
              <path d="M10 1H17V6H10Z" fill="#86dcfa" />
              <path d="M1 4H12V15H1Z" fill="#0f6cbd" />
              <circle cx="6.500" cy="9.500" r="2.600" fill="none" stroke="#fff" strokeWidth="1.600" />
            </svg>
            <svg width="17" height="18" viewBox="0 0 17 18" fill="none" stroke="#fff" strokeWidth="1.100">
              <path d="M5.500 2.500Q8.500 .5 11.500 2.500M5.500 15.500Q8.500 17.500 11.500 15.500M3.500 5.500H10.500V12.500H3.500ZM10.500 8 13.500 6V12L10.500 10" />
            </svg>
            <svg width="17" height="16" viewBox="0 0 17 16" fill="none" stroke="#fff">
              <path d="M6.500 3.500H16.500V11.500H6M11.500 11.500V14.500M8 14.500H15M.5 1.500H5.500V5.500H.5ZM3 5.500V14.500H8" />
            </svg>
            <svg width="18" height="16" viewBox="0 0 18 16" fill="none" stroke="#fff" strokeWidth="1.100">
              <path d="M1 5.500H3.500L7 2.500V13.500L3.500 10.500H1ZM9.500 5.500Q11 8 9.500 10.500M12 4Q14.500 8 12 12M14.500 2.500Q18 8 14.500 13.500" />
            </svg>
            <Clock>
              <div><Fit w={42}>8:26 PM</Fit></div>
              <div><Fit w={52}>5/16/2025</Fit></div>
            </Clock>
            <svg width="38" height="18" viewBox="0 0 38 18" fill="none" stroke="#fff" strokeWidth="1.200">
              <path d="M11.500 2.500H26.500V14H21L19 16.500 17 14H11.500Z" />
            </svg>
            <ShowDesktop />
          </Tray>
        </Taskbar>

        <Watermark>
          <WatermarkWord>ANY</WatermarkWord>
          <svg width="62" height="66" viewBox="0 0 62 66" fill="none" strokeLinejoin="round">
            <path d="M5 13V54L18 62M17 5 54 29 17 52V5ZM18 62 54 37M11 9V48" stroke="rgba(0,0,0,0.07)" strokeWidth="6.500" />
            <path d="M5 13V54L18 62M17 5 54 29 17 52V5ZM18 62 54 37M11 9V48" stroke="rgba(255,255,255,0.75)" strokeWidth="3.500" />
          </svg>
          <WatermarkWord>RUN</WatermarkWord>
        </Watermark>
      </Window>
    </>
  );
}
